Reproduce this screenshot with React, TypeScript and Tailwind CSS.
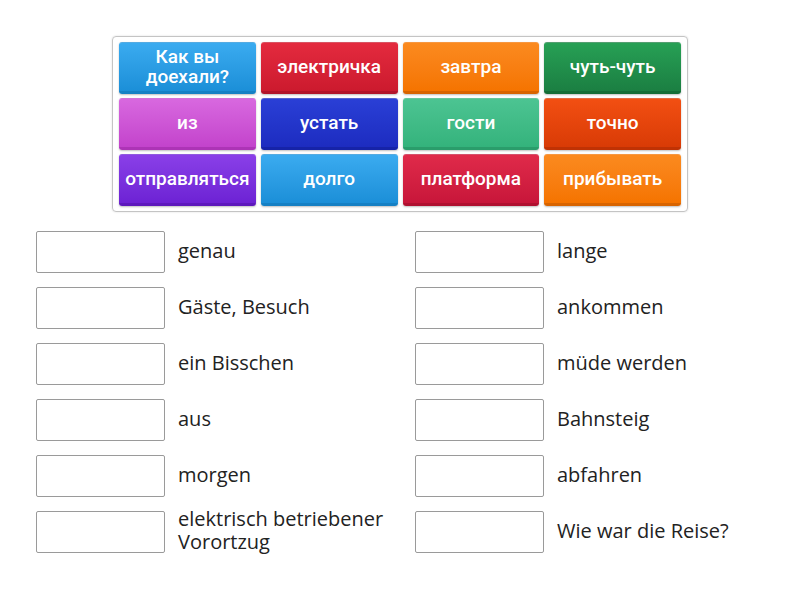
const tiles = [
  { text: "Как вы доехали?", cls: "from-[#3aabf0] to-[#1b8fd8] border-[#1580c4]" },
  { text: "электричка", cls: "from-[#e42a3e] to-[#cc1a2e] border-[#b2142a]" },
  { text: "завтра", cls: "from-[#fb8a1e] to-[#f57400] border-[#d86400]" },
  { text: "чуть-чуть", cls: "from-[#27a055] to-[#1b7f42] border-[#146d37]" },
  { text: "из", cls: "from-[#d868df] to-[#c343cc] border-[#ad34b6]" },
  { text: "устать", cls: "from-[#2a3fd6] to-[#1d2cc0] border-[#1623a8]" },
  { text: "гости", cls: "from-[#4cc492] to-[#34b37c] border-[#2a9d6b]" },
  { text: "точно", cls: "from-[#f24f12] to-[#d93b06] border-[#c03204]" },
  { text: "отправляться", cls: "from-[#8a3fe8] to-[#6d22d4] border-[#5d18bc]" },
  { text: "долго", cls: "from-[#3aabf0] to-[#1b8fd8] border-[#1580c4]" },
  { text: "платформа", cls: "from-[#e02a4a] to-[#c8163a] border-[#b01030]" },
  { text: "прибывать", cls: "from-[#fb8a1e] to-[#f57400] border-[#d86400]" },
];

const left = ["genau", "Gäste, Besuch", "ein Bisschen", "aus", "morgen", "elektrisch betriebener Vorortzug"];
const right = ["lange", "ankommen", "müde werden", "Bahnsteig", "abfahren", "Wie war die Reise?"];

function Slot({ label }: { label: string }) {
  return (
    <div className="flex items-center h-[42px]">
      <div className="w-[129px] h-[42px] shrink-0 border border-[#9a9a9a] rounded-[2px] bg-white" />
      <div className="ml-[13px] text-[20px] leading-[23px] text-[#222] font-['Open_Sans',sans-serif] w-[237px] -mt-[4px]">
        {label}
      </div>
    </div>
  );
}

export default function App() {
  return (
    <div className="w-[800px] h-[600px] bg-white overflow-hidden">
      <div className="pt-[36px] flex justify-center">
        <div className="w-[576px] border border-[#c4c4c4] rounded-[4px] px-[6px] pt-[5px] pb-[5px] grid grid-cols-4 gap-x-[5px] gap-y-[4px] shadow-[0_0_2px_rgba(0,0,0,0.15)]">
          {tiles.map((t) => (
            <div
              key={t.text}
              className={`h-[52px] rounded-[3px] bg-gradient-to-b ${t.cls} border-b-[3px] border-t border-t-white/25 shadow-[0_1px_2px_rgba(0,0,0,0.25)] flex items-center justify-center text-center text-white font-['Roboto','Liberation_Sans',sans-serif] font-medium text-[19px] leading-[20px] whitespace-nowrap`}
            >
              {t.text === "Как вы доехали?" ? (
                <span>
                  Как вы
                  <br />
                  доехали?
                </span>
              ) : (
                t.text
              )}
            </div>
          ))}
        </div>
      </div>
      <div className="mt-[19px] ml-[36px] flex">
        <div className="flex flex-col gap-[14px]">
          {left.map((l) => (
            <Slot key={l} label={l} />
          ))}
        </div>
        <div className="flex flex-col gap-[14px]">
          {right.map((l) => (
            <Slot key={l} label={l} />
          ))}
        </div>
      </div>
    </div>
  );
}
